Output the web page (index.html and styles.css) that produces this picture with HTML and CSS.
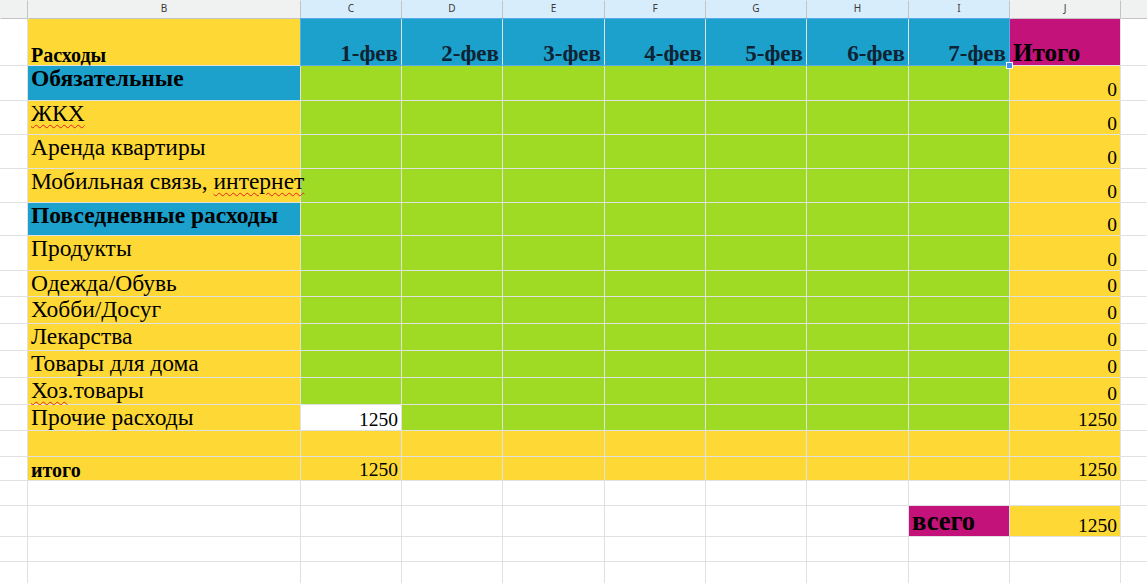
FILE: index.html
```html
<!DOCTYPE html>
<html lang="ru">
<head>
<meta charset="utf-8">
<title>Расходы</title>
<link rel="stylesheet" href="styles.css">
</head>
<body>
<div class="sheet">
  <div class="grid">
    <!-- column header row -->
    <div class="ch"></div>
    <div class="ch">B</div>
    <div class="ch sel">C</div>
    <div class="ch sel">D</div>
    <div class="ch sel">E</div>
    <div class="ch sel">F</div>
    <div class="ch sel">G</div>
    <div class="ch sel">H</div>
    <div class="ch sel">I</div>
    <div class="ch">J</div>
    <div class="ch"></div>

    <!-- row 1 -->
    <div class="c"></div>
    <div class="c y hb">Расходы</div>
    <div class="c b dt">1-фев</div>
    <div class="c b dt">2-фев</div>
    <div class="c b dt">3-фев</div>
    <div class="c b dt">4-фев</div>
    <div class="c b dt">5-фев</div>
    <div class="c b dt">6-фев</div>
    <div class="c b dt">7-фев</div>
    <div class="c m big">Итого</div>
    <div class="c"></div>

    <!-- row 2 -->
    <div class="c"></div>
    <div class="c b sec">Обязательные</div>
    <div class="c g"></div><div class="c g"></div><div class="c g"></div><div class="c g"></div><div class="c g"></div><div class="c g"></div><div class="c g"></div>
    <div class="c y num">0</div>
    <div class="c"></div>

    <!-- row 3 -->
    <div class="c"></div>
    <div class="c y txt"><span><span class="sp">ЖКХ</span></span></div>
    <div class="c g"></div><div class="c g"></div><div class="c g"></div><div class="c g"></div><div class="c g"></div><div class="c g"></div><div class="c g"></div>
    <div class="c y num">0</div>
    <div class="c"></div>

    <!-- row 4 -->
    <div class="c"></div>
    <div class="c y txt">Аренда квартиры</div>
    <div class="c g"></div><div class="c g"></div><div class="c g"></div><div class="c g"></div><div class="c g"></div><div class="c g"></div><div class="c g"></div>
    <div class="c y num">0</div>
    <div class="c"></div>

    <!-- row 5 -->
    <div class="c"></div>
    <div class="c y txt ovf"><span>Мобильная связь, <span class="sp">интернет</span></span></div>
    <div class="c g"></div><div class="c g"></div><div class="c g"></div><div class="c g"></div><div class="c g"></div><div class="c g"></div><div class="c g"></div>
    <div class="c y num">0</div>
    <div class="c"></div>

    <!-- row 6 -->
    <div class="c"></div>
    <div class="c b sec">Повседневные расходы</div>
    <div class="c g"></div><div class="c g"></div><div class="c g"></div><div class="c g"></div><div class="c g"></div><div class="c g"></div><div class="c g"></div>
    <div class="c y num">0</div>
    <div class="c"></div>

    <!-- row 7 -->
    <div class="c"></div>
    <div class="c y txt">Продукты</div>
    <div class="c g"></div><div class="c g"></div><div class="c g"></div><div class="c g"></div><div class="c g"></div><div class="c g"></div><div class="c g"></div>
    <div class="c y num">0</div>
    <div class="c"></div>

    <!-- row 8 -->
    <div class="c"></div>
    <div class="c y txt">Одежда/Обувь</div>
    <div class="c g"></div><div class="c g"></div><div class="c g"></div><div class="c g"></div><div class="c g"></div><div class="c g"></div><div class="c g"></div>
    <div class="c y num">0</div>
    <div class="c"></div>

    <!-- row 9 -->
    <div class="c"></div>
    <div class="c y txt">Хобби/Досуг</div>
    <div class="c g"></div><div class="c g"></div><div class="c g"></div><div class="c g"></div><div class="c g"></div><div class="c g"></div><div class="c g"></div>
    <div class="c y num">0</div>
    <div class="c"></div>

    <!-- row 10 -->
    <div class="c"></div>
    <div class="c y txt">Лекарства</div>
    <div class="c g"></div><div class="c g"></div><div class="c g"></div><div class="c g"></div><div class="c g"></div><div class="c g"></div><div class="c g"></div>
    <div class="c y num">0</div>
    <div class="c"></div>

    <!-- row 11 -->
    <div class="c"></div>
    <div class="c y txt">Товары для дома</div>
    <div class="c g"></div><div class="c g"></div><div class="c g"></div><div class="c g"></div><div class="c g"></div><div class="c g"></div><div class="c g"></div>
    <div class="c y num">0</div>
    <div class="c"></div>

    <!-- row 12 -->
    <div class="c"></div>
    <div class="c y txt"><span><span class="sp">Хоз</span>.товары</span></div>
    <div class="c g"></div><div class="c g"></div><div class="c g"></div><div class="c g"></div><div class="c g"></div><div class="c g"></div><div class="c g"></div>
    <div class="c y num">0</div>
    <div class="c"></div>

    <!-- row 13 -->
    <div class="c"></div>
    <div class="c y txt">Прочие расходы</div>
    <div class="c num">1250</div>
    <div class="c g"></div><div class="c g"></div><div class="c g"></div><div class="c g"></div><div class="c g"></div><div class="c g"></div>
    <div class="c y num">1250</div>
    <div class="c"></div>

    <!-- row 14 -->
    <div class="c"></div>
    <div class="c y"></div>
    <div class="c y"></div><div class="c y"></div><div class="c y"></div><div class="c y"></div><div class="c y"></div><div class="c y"></div><div class="c y"></div>
    <div class="c y"></div>
    <div class="c"></div>

    <!-- row 15 -->
    <div class="c"></div>
    <div class="c y tot">итого</div>
    <div class="c y num">1250</div>
    <div class="c y"></div><div class="c y"></div><div class="c y"></div><div class="c y"></div><div class="c y"></div><div class="c y"></div>
    <div class="c y num">1250</div>
    <div class="c"></div>

    <!-- row 16 -->
    <div class="c"></div><div class="c"></div><div class="c"></div><div class="c"></div><div class="c"></div><div class="c"></div><div class="c"></div><div class="c"></div><div class="c"></div><div class="c"></div><div class="c"></div>

    <!-- row 17 -->
    <div class="c"></div><div class="c"></div><div class="c"></div><div class="c"></div><div class="c"></div><div class="c"></div><div class="c"></div><div class="c"></div>
    <div class="c m big vs">всего</div>
    <div class="c y num">1250</div>
    <div class="c"></div>

    <!-- row 18 -->
    <div class="c"></div><div class="c"></div><div class="c"></div><div class="c"></div><div class="c"></div><div class="c"></div><div class="c"></div><div class="c"></div><div class="c"></div><div class="c"></div><div class="c"></div>

    <!-- row 19 -->
    <div class="c"></div><div class="c"></div><div class="c"></div><div class="c"></div><div class="c"></div><div class="c"></div><div class="c"></div><div class="c"></div><div class="c"></div><div class="c"></div><div class="c"></div>
  </div>
  <div class="selection"><span class="handle"></span></div>
</div>
</body>
</html>
```

FILE: styles.css
```css
html, body {
  margin: 0;
  padding: 0;
  background: #ffffff;
  overflow: hidden;
}

.sheet {
  position: relative;
  width: 1147px;
  height: 583px;
  overflow: hidden;
}

.grid {
  display: grid;
  grid-template-columns: 27px 272px 100px 100px 101px 100px 100px 101px 100px 110px 40px;
  grid-template-rows: 18px 46px 34px 33px 33px 33px 32px 34px 25px 26px 26px 26px 26px 25px 25px 23px 24px 30px 24px 24px;
  gap: 1px;
  background: #e1e1e1;
  font-family: "Liberation Serif", "Times New Roman", serif;
  color: #000;
}

.ch {
  background: #f0f1f1;
  box-shadow: 1px 1px 0 #c4c4c4;
  font-family: "Noto Sans", "DejaVu Sans", sans-serif;
  font-size: 10px;
  line-height: 17px;
  color: #3a3a3a;
  text-align: center;
}

.ch.sel {
  background: #d8edfc;
}

.c {
  background: #ffffff;
  display: flex;
  padding: 0 3px;
  white-space: nowrap;
  overflow: visible;
  line-height: 1;
  min-width: 0;
}

.y { background: #fed935; }
.b { background: #1ca1cc; }
.g { background: #9fda25; }
.m { background: #c3127a; }

.hb {
  font-weight: bold;
  font-size: 20px;
  align-items: flex-end;
  padding-bottom: 0;
}

.dt {
  font-weight: bold;
  font-size: 23px;
  color: #0e2334;
  align-items: flex-end;
  justify-content: flex-end;
}

.big {
  font-weight: bold;
  font-size: 25px;
  align-items: flex-end;
  color: #000;
}

.vs {
  font-size: 26.5px;
  padding-bottom: 2px;
}

.sec {
  font-weight: bold;
  font-size: 23.5px;
  align-items: flex-start;
  padding-top: 1px;
}

.txt {
  font-size: 23.5px;
  align-items: flex-start;
  padding-top: 1px;
}

.ovf {
  position: relative;
  z-index: 1;
}

.sp {
  text-decoration: underline wavy #e3241b;
  text-decoration-thickness: 1px;
  text-underline-offset: 3px;
}

.num {
  font-size: 19.5px;
  align-items: flex-end;
  justify-content: flex-end;
  padding-bottom: 1px;
}

.tot {
  font-weight: bold;
  font-size: 20px;
  align-items: flex-end;
}

.selection {
  position: absolute;
  left: 300px;
  top: 18px;
  width: 708px;
  height: 46px;
  border: 1px solid #5aa9e8;
  pointer-events: none;
}

.handle {
  position: absolute;
  right: -4px;
  bottom: -4px;
  width: 5px;
  height: 5px;
  background: #3d93ea;
  border: 1px solid #ffffff;
}
```
